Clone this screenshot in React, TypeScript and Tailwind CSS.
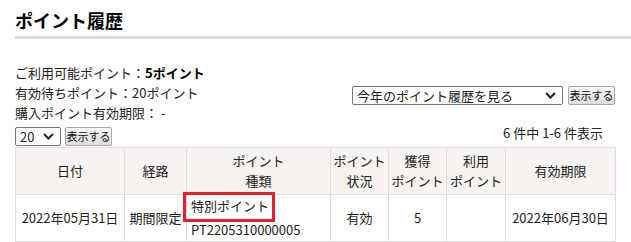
import React from 'react';

const font = { fontFamily: '"Noto Sans CJK JP", "Noto Sans", sans-serif' };

const Chevron = () => (
  <svg width="11" height="7" viewBox="0 0 11 7" className="shrink-0">
    <path d="M1 1l4.5 4.5L10 1" fill="none" stroke="#222" strokeWidth="2" />
  </svg>
);

const Select: React.FC<{ label: string; className: string }> = ({ label, className }) => (
  <div className={`flex items-center justify-between border border-[#767676] rounded-[2px] bg-white pl-[4px] pr-[6px] text-[13px] text-[#222] ${className}`}>
    <span className="leading-none">{label}</span>
    <Chevron />
  </div>
);

const Button: React.FC = () => (
  <div className="flex items-center justify-center w-[47px] border border-[#a8a8a8] rounded-[2px] bg-gradient-to-b from-[#f6f6f6] to-[#dedede] text-[11px] text-[#111] h-[19px] leading-none">
    表示する
  </div>
);

export default function App() {
  return (
    <div className="w-[631px] h-[242px] bg-white overflow-hidden text-[#222]" style={font}>
      <div className="pl-[15px]">
        <h1 className="pt-[7px] text-[18px] font-bold leading-[26px] text-black">ポイント履歴</h1>
        <div className="mt-[3px] h-[3px] bg-[#e3dbd5]" />
      </div>

      <div className="px-[15px] pt-[24px] text-[13px]">
        <div className="flex justify-between">
          <div className="leading-[20px]">
            <div>
              ご利用可能ポイント：<span className="font-bold text-black">5ポイント</span>
            </div>
            <div>有効待ちポイント：20ポイント</div>
            <div>購入ポイント有効期限： -</div>
          </div>
          <div className="flex items-start gap-[5px] pt-[23px] pr-[1px]">
            <Select label="今年のポイント履歴を見る" className="w-[211px] h-[19px]" />
            <Button />
          </div>
        </div>

        <div className="flex items-center justify-between mt-[3px] h-[21px]">
          <div className="flex items-center gap-[4px]">
            <Select label="20" className="w-[46px] h-[19px]" />
            <Button />
          </div>
          <div className="self-start mt-[-3px] pr-[13px] leading-[20px]">6 件中 1-6 件表示</div>
        </div>

        <table className="w-[600px] table-fixed border-collapse text-[13px] leading-[20px]">
          <colgroup>
            <col className="w-[109px]" />
            <col className="w-[62px]" />
            <col className="w-[144px]" />
            <col className="w-[58px]" />
            <col className="w-[58px]" />
            <col className="w-[59px]" />
            <col className="w-[110px]" />
          </colgroup>
          <thead>
            <tr className="bg-[#f6f3f0] h-[47px]">
              <th className="border border-[#dcdcdc] font-normal text-center">日付</th>
              <th className="border border-[#dcdcdc] font-normal text-center">経路</th>
              <th className="border border-[#dcdcdc] font-normal text-center">ポイント<br />種類</th>
              <th className="border border-[#dcdcdc] font-normal text-center">ポイント<br />状況</th>
              <th className="border border-[#dcdcdc] font-normal text-center">獲得<br />ポイント</th>
              <th className="border border-[#dcdcdc] font-normal text-center">利用<br />ポイント</th>
              <th className="border border-[#dcdcdc] font-normal text-center">有効期限</th>
            </tr>
          </thead>
          <tbody>
            <tr className="h-[47px]">
              <td className="border border-[#dcdcdc] text-center whitespace-nowrap">2022年05月31日</td>
              <td className="border border-[#dcdcdc] text-center whitespace-nowrap">期間限定</td>
              <td className="border border-[#dcdcdc] pl-[4px] whitespace-nowrap">
                <div className="relative">
                  <span>特別ポイント</span>
                  <span className="absolute left-[-8px] top-[-4px] w-[92px] h-[30px] border-[3px] border-[#e8202a]" />
                </div>
                <div className="mt-[4px]">PT2205310000005</div>
              </td>
              <td className="border border-[#dcdcdc] text-center">有効</td>
              <td className="border border-[#dcdcdc] text-center">5</td>
              <td className="border border-[#dcdcdc] text-center"></td>
              <td className="border border-[#dcdcdc] text-center whitespace-nowrap">2022年06月30日</td>
            </tr>
          </tbody>
        </table>
      </div>
    </div>
  );
}
